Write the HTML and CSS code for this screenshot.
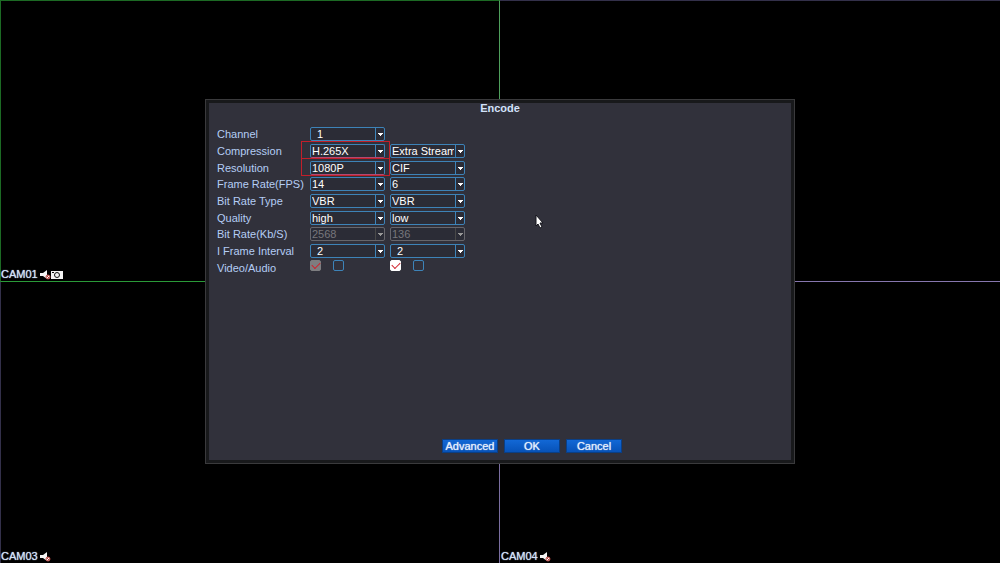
FILE: index.html
```html
<!DOCTYPE html>
<html lang="en">
<head>
	<meta charset="utf-8">
	<title>Encode</title>
	<link rel="stylesheet" href="styles.css">
</head>
<body>
<svg class="defs" aria-hidden="true">
	<symbol id="muted" viewBox="0 0 11 10">
		<path d="M0 3h3l4-3v9L3 6H0z" fill="#f4f4f4"/>
		<circle cx="8" cy="7" r="2" fill="#fff" stroke="#b8403c"/>
		<path d="M7 6l2 2" stroke="#b8403c"/>
	</symbol>
</svg>
<main class="wall">
	<section class="cam active">
		<span>CAM01</span>
		<svg class="muted"><use href="#muted"/></svg>
		<svg class="record" viewBox="0 0 12 8">
			<path d="M0 0h12v8H0z" fill="#f4f4f4"/>
			<circle cx="6" cy="4" r="2.5" fill="none" stroke="#111"/>
			<path d="M1 1.5h2" stroke="#111"/>
		</svg>
	</section>
	<section class="cam"></section>
	<section class="cam">
		<span>CAM03</span>
		<svg class="muted"><use href="#muted"/></svg>
	</section>
	<section class="cam">
		<span>CAM04</span>
		<svg class="muted"><use href="#muted"/></svg>
	</section>
</main>
<form class="dialog" onsubmit="return false;">
	<h1>Encode</h1>
	<div class="fields">
		<label for="channel">Channel</label>
		<div class="pick"><select id="channel" class="number"><option>1</option></select></div>

		<label for="compression">Compression</label>
		<div class="pick marked"><select id="compression"><option>H.265X</option></select></div>
		<div class="pick"><select aria-label="Stream"><option>Extra Stream</option></select></div>

		<label for="resolution">Resolution</label>
		<div class="pick marked"><select id="resolution"><option>1080P</option></select></div>
		<div class="pick"><select aria-label="Extra stream resolution"><option>CIF</option></select></div>

		<label for="fps">Frame Rate(FPS)</label>
		<div class="pick"><select id="fps"><option>14</option></select></div>
		<div class="pick"><select aria-label="Extra stream frame rate"><option>6</option></select></div>

		<label for="ratetype">Bit Rate Type</label>
		<div class="pick"><select id="ratetype"><option>VBR</option></select></div>
		<div class="pick"><select aria-label="Extra stream bit rate type"><option>VBR</option></select></div>

		<label for="quality">Quality</label>
		<div class="pick"><select id="quality"><option>high</option></select></div>
		<div class="pick"><select aria-label="Extra stream quality"><option>low</option></select></div>

		<label for="bitrate">Bit Rate(Kb/S)</label>
		<div class="pick off"><select id="bitrate" disabled><option>2568</option></select></div>
		<div class="pick off"><select aria-label="Extra stream bit rate" disabled><option>136</option></select></div>

		<label for="interval">I Frame Interval</label>
		<div class="pick"><select id="interval" class="number"><option>2</option></select></div>
		<div class="pick"><select aria-label="Extra stream I frame interval" class="number"><option>2</option></select></div>

		<label for="video">Video/Audio</label>
		<div class="checks">
			<input type="checkbox" id="video" checked disabled>
			<input type="checkbox" aria-label="Audio">
		</div>
		<div class="checks">
			<input type="checkbox" aria-label="Extra stream video" checked>
			<input type="checkbox" aria-label="Extra stream audio">
		</div>
	</div>
	<footer>
		<button type="button">Advanced</button>
		<button type="submit">OK</button>
		<button type="button">Cancel</button>
	</footer>
</form>
<svg class="pointer" viewBox="0 0 9 15" aria-hidden="true">
	<path d="M1 1v11l2-2 2 4 2-1-2-4h3z" fill="#fff" stroke="#15151c"/>
</svg>
</body>
</html>
```

FILE: styles.css
```css
* {
	margin: 0;
	padding: 0;
	box-sizing: border-box;
}
body {
	display: grid;
	place-items: center;
	min-height: 100vh;
	background: #000;
	color: #b4cdf5;
	font: 11px/14px "Liberation Sans", Arial, sans-serif;
}
.defs {
	position: absolute;
	width: 0;
	height: 0;
}

/* camera wall */
.wall {
	position: absolute;
	inset: 0;
	display: grid;
	grid-template: 1fr 1fr / 1fr 1fr;
}
.cam {
	display: flex;
	align-items: flex-end;
	color: #d3e2fa;
	text-shadow: 0 0 1px currentColor;
}
.cam.active {
	border: 1px solid #1c6a24;
	border-right-color: #4f9f5c;
	border-bottom-color: #2a9a38;
}
.cam:nth-child(2) {
	border-top: 1px solid #33304a;
	border-bottom: 1px solid #8676ae;
}
.cam:nth-child(3) {
	border-left: 1px solid #33304a;
	border-right: 1px solid #7a6ea0;
}
.cam:nth-child(4) {
	padding-left: 1px;
}
.muted {
	width: 11px;
	height: 10px;
	margin: 0 0 1px 2px;
}
.record {
	width: 12px;
	height: 8px;
	margin-bottom: 2px;
}

/* settings dialog */
.dialog {
	position: relative;
	display: flex;
	flex-direction: column;
	width: 590px;
	max-width: 100%;
	min-height: 365px;
	padding: 0 8px 10px;
	background: #31313b;
	border: 1px solid #3a3a3c;
	box-shadow: inset 0 0 0 3px #18191b;
}
h1 {
	padding-top: 1px;
	color: #d3e2fa;
	font-size: 11px;
	line-height: 14px;
	text-align: center;
}
.fields {
	display: grid;
	grid-template-columns: 88px 75px 75px;
	grid-template-rows: repeat(9, 1fr);
	gap: 0 5px;
	align-items: center;
	height: 150px;
	margin: 11px 0 auto 3px;
}
.fields label {
	grid-column: 1;
	white-space: nowrap;
}
.pick {
	position: relative;
	height: 14px;
}
select {
	display: block;
	width: 100%;
	height: 14px;
	padding: 0 10px 0 1px;
	appearance: none;
	background: #2b2c36;
	border: 1px solid #3d83b8;
	border-radius: 2px;
	color: #fff;
	font: inherit;
	line-height: 12px;
}
select.number {
	padding-left: 6px;
}
.pick::after {
	content: "";
	position: absolute;
	top: 1px;
	right: 1px;
	width: 9px;
	height: 12px;
	background: linear-gradient(#3d83b8, #3d83b8) left / 1px 100% no-repeat,
		conic-gradient(from -45deg at 50% 100%, #fff 90deg, transparent 0) 3px 5px / 5px 3px no-repeat;
	pointer-events: none;
}
.marked select {
	border-bottom-color: #b04a72;
}
.marked::before {
	content: "";
	position: absolute;
	inset: -3px -5px -1px -9px;
	border: 1px solid #c21f2a;
	pointer-events: none;
}
.off select {
	border-color: #66666c;
	color: #77777c;
	opacity: 1;
}
.off::after {
	filter: grayscale(1) brightness(0.6);
}
.checks {
	display: flex;
	align-self: start;
	gap: 12px;
	margin-top: 1px;
}
input {
	width: 11px;
	height: 11px;
	appearance: none;
	border: 1px solid #3d83b8;
	border-radius: 2px;
}
input:checked {
	position: relative;
	background: #fff;
	border-color: #fff;
}
input:checked:disabled {
	background: #7d7d80;
	border-color: #7d7d80;
}
input:checked::after {
	content: "";
	position: absolute;
	top: 1px;
	left: 1px;
	width: 7px;
	height: 4px;
	border: solid #d0222c;
	border-width: 0 0 1px 1px;
	transform: rotate(-45deg);
}
footer {
	display: flex;
	justify-content: center;
	gap: 6px;
	margin-left: 64px;
}
button {
	width: 56px;
	height: 14px;
	background: linear-gradient(#1268d6, #0752b8);
	border: 1px solid #0a3f86;
	color: #e4eefc;
	font: inherit;
	line-height: 12px;
	text-shadow: 0 0 1px currentColor;
}
.pointer {
	position: absolute;
	top: 214px;
	left: 535px;
	width: 9px;
	height: 15px;
	pointer-events: none;
}
```
